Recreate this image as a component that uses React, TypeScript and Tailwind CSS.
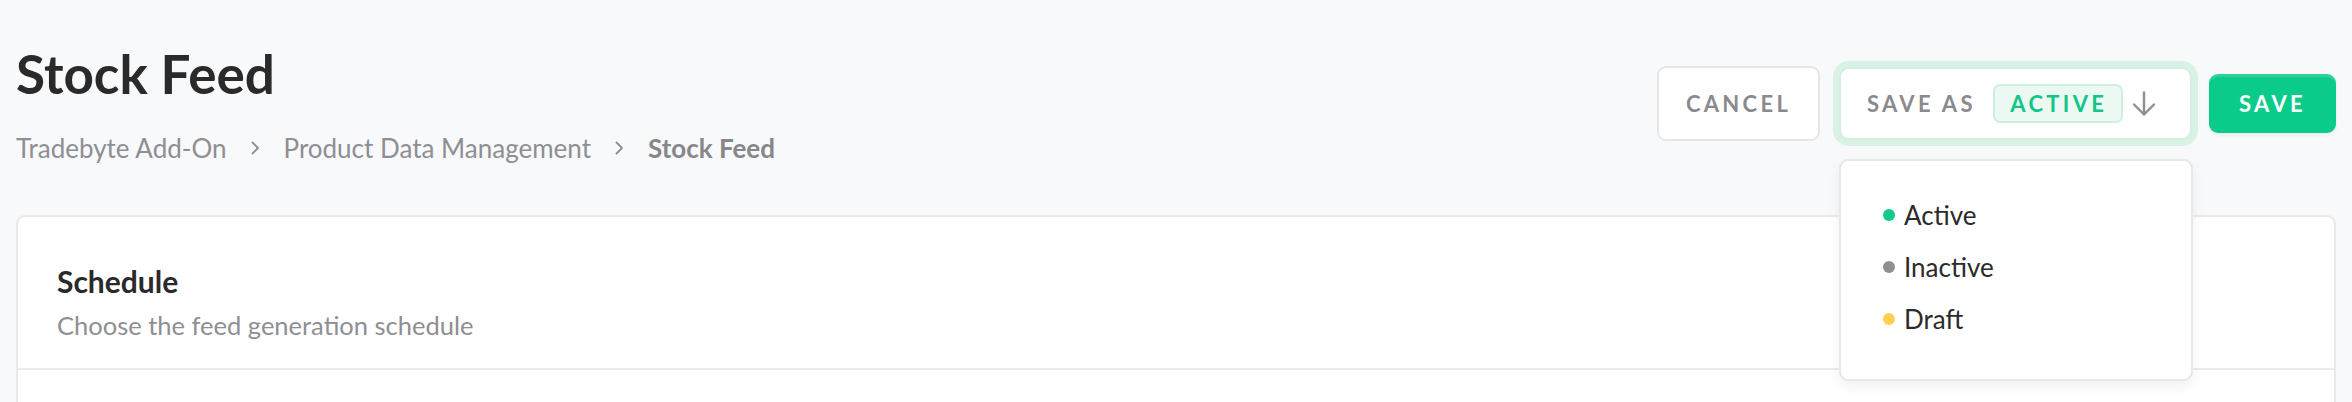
import React from 'react';

const statuses = [
  { label: 'Active', dot: 'bg-[#12c98c]' },
  { label: 'Inactive', dot: 'bg-[#8e8e93]' },
  { label: 'Draft', dot: 'bg-[#ffd04d]' },
];

const Chevron = () => (
  <svg width="9" height="14" viewBox="0 0 9 14" fill="none" className="mx-[24px] shrink-0">
    <path d="M1.5 1.5L7 7l-5.5 5.5" stroke="#8e8e93" strokeWidth="1.8" strokeLinecap="round" strokeLinejoin="round" />
  </svg>
);

export default function App() {
  return (
    <div className="min-h-[402px] bg-[#f8f9fb] px-[16px] pt-[42px] font-['Lato',sans-serif]">
      {/* Header */}
      <div className="flex items-start justify-between">
        <div>
          <h1 className="text-[53px] leading-[1.2] font-bold text-[#2a2a2a]">Stock Feed</h1>
          <nav className="mt-[27px] flex items-center text-[26px] leading-[1.2] text-[#8e8e93]">
            <span>Tradebyte Add-On</span>
            <Chevron />
            <span>Product Data Management</span>
            <Chevron />
            <span className="font-bold text-[#86868b]">Stock Feed</span>
          </nav>
        </div>

        <div className="mt-[24px] flex items-center">
          <button className="h-[75px] w-[163px] rounded-[9px] border-2 border-[#e6e6e8] bg-white text-[22px] font-bold tracking-[0.15em] text-[#8a8a8e]">
            CANCEL
          </button>

          <div className="relative ml-[19px]">
            <button className="flex h-[73px] w-[353px] items-center rounded-[10px] border-2 border-[#d3efe2] bg-white pl-[26px] shadow-[0_0_0_6px_#d8f2e6]">
              <span className="text-[22px] font-bold tracking-[0.15em] text-[#8a8a8e]">SAVE AS</span>
              <span className="ml-[17px] flex h-[39px] w-[130px] items-center justify-center rounded-[7px] border-2 border-[#cdefde] bg-[#ecf9f3] pl-[2px] text-[22px] font-bold tracking-[0.15em] text-[#10c688]">
                ACTIVE
              </span>
              <svg width="24" height="26" viewBox="0 0 24 26" fill="none" className="ml-[9px]">
                <path d="M12 1.5v22M2 13.5l10 10 10-10" stroke="#8e8e93" strokeWidth="2.4" strokeLinecap="round" strokeLinejoin="round" />
              </svg>
            </button>

            {/* Status menu */}
            <div className="absolute left-0 top-[92px] z-10 w-[354px] rounded-[9px] border-2 border-[#e8e8ea] bg-white pb-[34px] pl-[42px] pt-[28px] shadow-[0_6px_14px_rgba(0,0,0,0.06)]">
              {statuses.map((s) => (
                <div key={s.label} className="flex h-[52px] items-center text-[26px] text-[#2b2b2b]">
                  <span className={`mr-[9px] h-[12px] w-[12px] rounded-full ${s.dot}`} />
                  {s.label}
                </div>
              ))}
            </div>
          </div>

          <button className="ml-[17px] h-[59px] w-[127px] rounded-[9px] bg-[#0bcb8a] text-[22px] font-bold tracking-[0.15em] text-white shadow-[inset_0_3px_0_rgba(255,255,255,0.15),0_2px_4px_rgba(0,0,0,0.06)]">
            SAVE
          </button>
        </div>
      </div>

      {/* Card */}
      <div className="mt-[51px] rounded-[9px] border-2 border-[#e9e9eb] bg-white">
        <div className="border-b-2 border-[#ebebed] pb-[28px] pl-[39px] pt-[46px]">
          <h2 className="text-[30px] leading-[1.2] font-bold text-[#2a2a2a]">Schedule</h2>
          <p className="mt-[11px] text-[25.5px] leading-[1.2] text-[#8e8e93]">Choose the feed generation schedule</p>
        </div>
        <div className="h-[120px]" />
      </div>
    </div>
  );
}
